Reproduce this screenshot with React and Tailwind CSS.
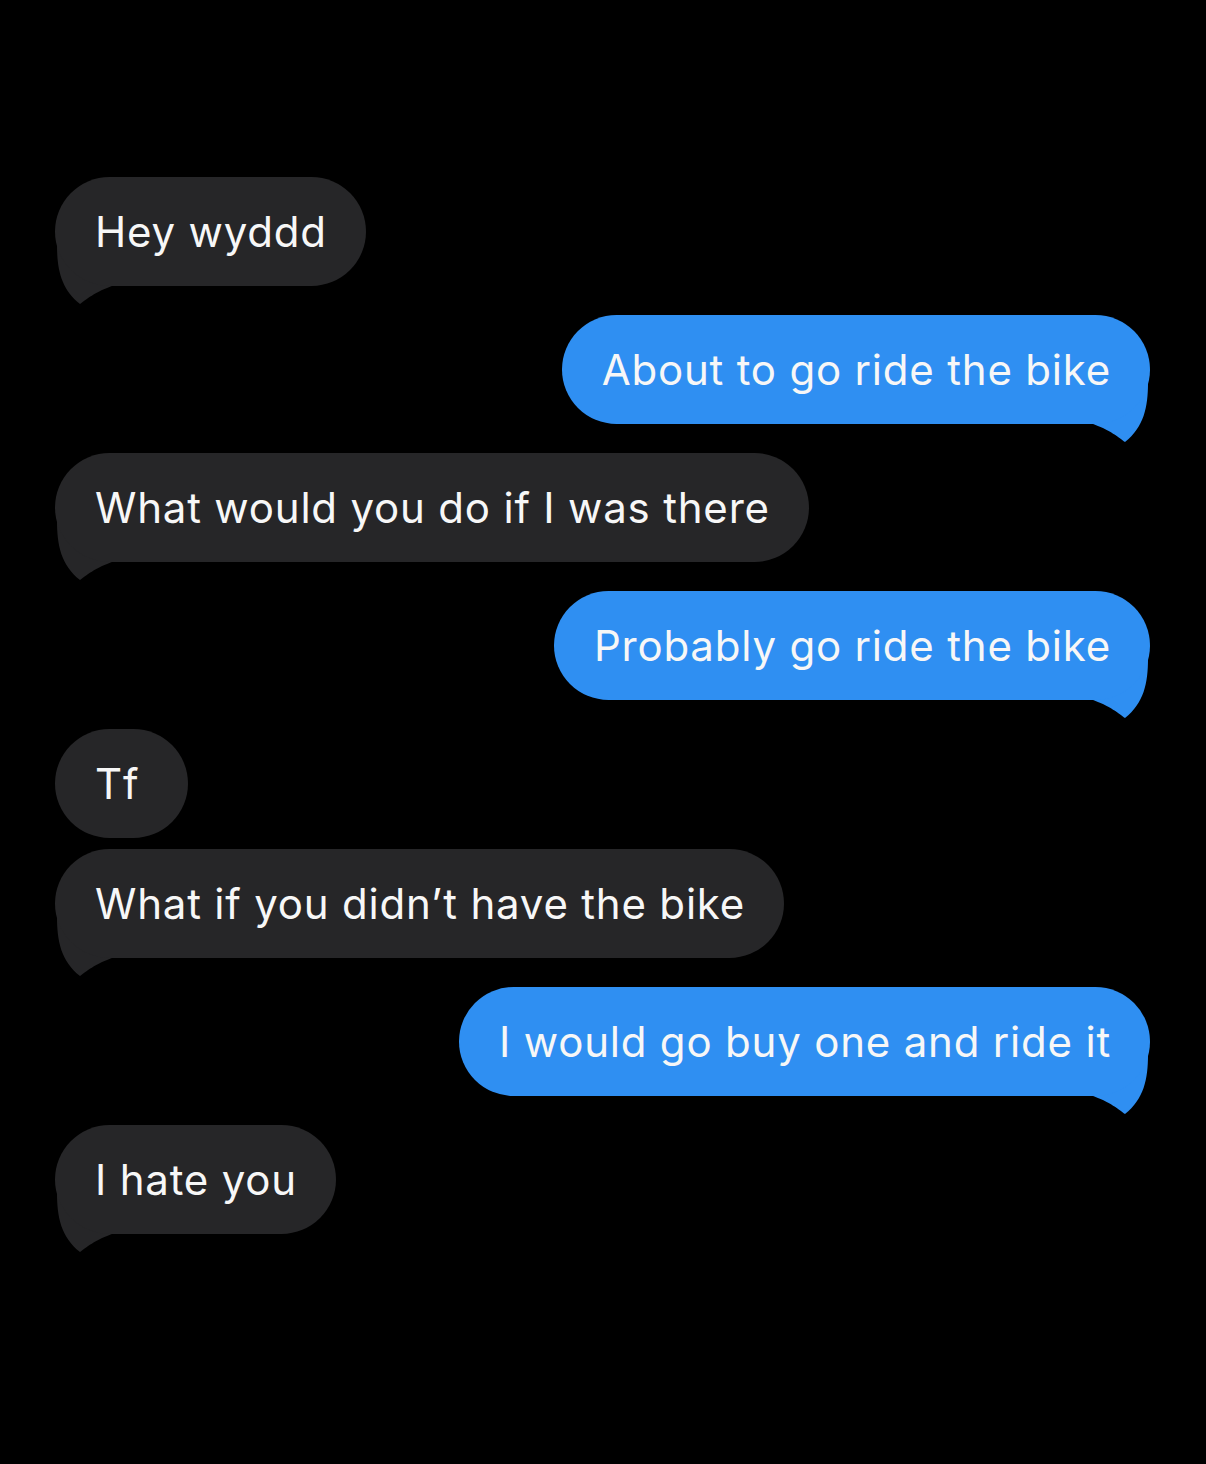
import React from 'react';

const messages = [
  { id: 1, text: 'Hey wyddd', me: false, tail: true },
  { id: 2, text: 'About to go ride the bike', me: true, tail: true },
  { id: 3, text: 'What would you do if I was there', me: false, tail: true },
  { id: 4, text: 'Probably go ride the bike', me: true, tail: true },
  { id: 5, text: 'Tf', me: false, tail: false },
  { id: 6, text: 'What if you didn\u2019t have the bike', me: false, tail: true, tight: true },
  { id: 7, text: 'I would go buy one and ride it', me: true, tail: true },
  { id: 8, text: 'I hate you', me: false, tail: true },
];

// little hook under the bubble, mirrored for outgoing messages
function Tail({ me }) {
  return (
    <svg
      className={
        me
          ? 'absolute right-0 top-[68px] w-[60px] h-[60px] -scale-x-100'
          : 'absolute left-0 top-[68px] w-[60px] h-[60px]'
      }
      viewBox="0 0 60 60"
    >
      <path
        d="M2 0 C2 24 6 44 25 59 C31 55 39 47 60 40 L60 0 Z"
        fill={me ? '#2f8ff2' : '#262628'}
      />
    </svg>
  );
}

function Bubble({ msg }) {
  return (
    <div
      className={`relative ${msg.me ? 'self-end' : 'self-start'} ${msg.tight ? 'mt-[11px]' : 'mt-[29px]'} first:mt-0`}
    >
      {msg.tail && <Tail me={msg.me} />}
      <div
        className={`relative h-[109px] min-w-[133px] flex items-center pl-[40px] pr-[39px] rounded-[55px] text-[42px] leading-none text-[#f7f7f7] tracking-[0.8px] ${
          msg.me ? 'bg-[#2f8ff2]' : 'bg-[#262628]'
        }`}
        style={{ fontFamily: 'Inter, "Liberation Sans", sans-serif' }}
      >
        {msg.text}
      </div>
    </div>
  );
}

export default function App() {
  return (
    <div className="w-[1206px] h-[1464px] bg-black overflow-hidden">
      <div className="flex flex-col pt-[177px] pl-[55px] pr-[56px]">
        {messages.map(m => (
          <Bubble key={m.id} msg={m} />
        ))}
      </div>
    </div>
  );
}
